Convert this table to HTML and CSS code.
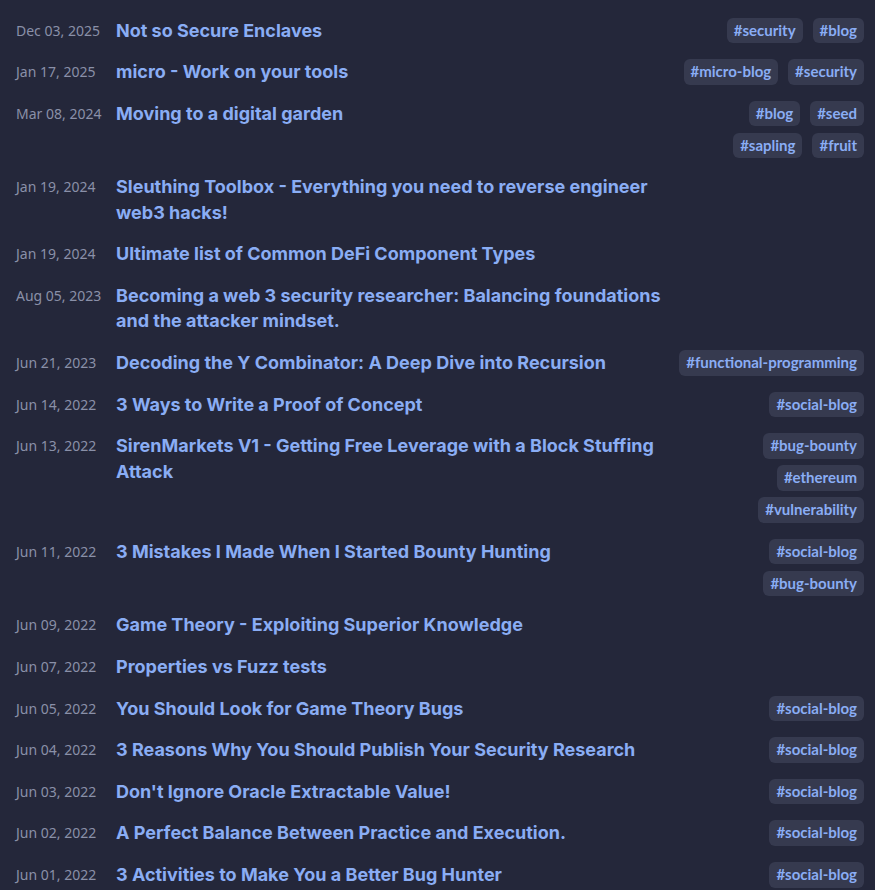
FILE: index.html
```html
<!DOCTYPE html>
<html lang="en">
<head>
<meta charset="utf-8">
<title>Posts</title>
<link rel="stylesheet" href="styles.css">
</head>
<body>
<ul class="posts">
  <li class="post"><span class="date">Dec 03, 2025</span><a class="title" href="#">Not so Secure Enclaves</a><div class="tags"><span class="tag">#security</span><span class="tag">#blog</span></div></li>
  <li class="post"><span class="date">Jan 17, 2025</span><a class="title" href="#">micro - Work on your tools</a><div class="tags"><span class="tag">#micro-blog</span><span class="tag">#security</span></div></li>
  <li class="post"><span class="date">Mar 08, 2024</span><a class="title" href="#">Moving to a digital garden</a><div class="tags"><span class="tag">#blog</span><span class="tag">#seed</span><span class="tag">#sapling</span><span class="tag">#fruit</span></div></li>
  <li class="post"><span class="date">Jan 19, 2024</span><a class="title" href="#">Sleuthing Toolbox - Everything you need to reverse engineer web3 hacks!</a><div class="tags"></div></li>
  <li class="post"><span class="date">Jan 19, 2024</span><a class="title" href="#">Ultimate list of Common DeFi Component Types</a><div class="tags"></div></li>
  <li class="post"><span class="date">Aug 05, 2023</span><a class="title" href="#">Becoming a web 3 security researcher: Balancing foundations and the attacker mindset.</a><div class="tags"></div></li>
  <li class="post"><span class="date">Jun 21, 2023</span><a class="title" href="#">Decoding the Y Combinator: A Deep Dive into Recursion</a><div class="tags"><span class="tag">#functional-programming</span></div></li>
  <li class="post"><span class="date">Jun 14, 2022</span><a class="title" href="#">3 Ways to Write a Proof of Concept</a><div class="tags"><span class="tag">#social-blog</span></div></li>
  <li class="post"><span class="date">Jun 13, 2022</span><a class="title" href="#">SirenMarkets V1 - Getting Free Leverage with a Block Stuffing Attack</a><div class="tags"><span class="tag">#bug-bounty</span><span class="tag">#ethereum</span><span class="tag">#vulnerability</span></div></li>
  <li class="post"><span class="date">Jun 11, 2022</span><a class="title" href="#">3 Mistakes I Made When I Started Bounty Hunting</a><div class="tags"><span class="tag">#social-blog</span><span class="tag">#bug-bounty</span></div></li>
  <li class="post"><span class="date">Jun 09, 2022</span><a class="title" href="#">Game Theory - Exploiting Superior Knowledge</a><div class="tags"></div></li>
  <li class="post"><span class="date">Jun 07, 2022</span><a class="title" href="#">Properties vs Fuzz tests</a><div class="tags"></div></li>
  <li class="post"><span class="date">Jun 05, 2022</span><a class="title" href="#">You Should Look for Game Theory Bugs</a><div class="tags"><span class="tag">#social-blog</span></div></li>
  <li class="post"><span class="date">Jun 04, 2022</span><a class="title" href="#">3 Reasons Why You Should Publish Your Security Research</a><div class="tags"><span class="tag">#social-blog</span></div></li>
  <li class="post"><span class="date">Jun 03, 2022</span><a class="title" href="#">Don't Ignore Oracle Extractable Value!</a><div class="tags"><span class="tag">#social-blog</span></div></li>
  <li class="post"><span class="date">Jun 02, 2022</span><a class="title" href="#">A Perfect Balance Between Practice and Execution.</a><div class="tags"><span class="tag">#social-blog</span></div></li>
  <li class="post"><span class="date">Jun 01, 2022</span><a class="title" href="#">3 Activities to Make You a Better Bug Hunter</a><div class="tags"><span class="tag">#social-blog</span></div></li>
</ul>
</body>
</html>
```
FILE: styles.css
```css
html, body {
  margin: 0;
  padding: 0;
  background: #24273a;
}
body {
  font-family: Inter, "Noto Sans", sans-serif;
  overflow: hidden;
}
.posts {
  list-style: none;
  margin: 0;
  padding: 17.5px 11px 0 16px;
}
.post {
  display: grid;
  grid-template-columns: 100px minmax(0, 1fr) 190px;
  column-gap: 10px;
  align-items: start;
  padding-bottom: 16.1px;
}
.date {
  font-family: "Noto Sans", sans-serif;
  font-size: 14px;
  line-height: 25.5px;
  color: #8a90a8;
  white-space: nowrap;
}
.title {
  margin-left: -10px;
  font-family: Inter, sans-serif;
  font-weight: 700;
  font-size: 18px;
  line-height: 25.5px;
  color: #8aadf4;
  text-decoration: none;
}
.tags {
  display: flex;
  flex-wrap: wrap;
  justify-content: flex-end;
  gap: 6.5px 10px;
  padding-left: 4px;
}
.tag {
  flex-shrink: 0;
  white-space: nowrap;
  height: 25.5px;
  line-height: 25.5px;
  padding: 0 7px;
  border-radius: 6px;
  background: #363a4f;
  color: #8aadf4;
  font-family: Lato, sans-serif;
  font-weight: 700;
  font-size: 15px;
}
```
